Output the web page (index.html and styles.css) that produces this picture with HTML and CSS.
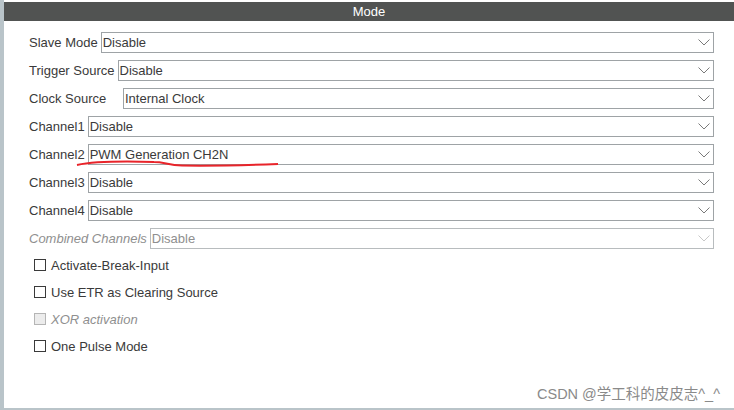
FILE: index.html
```html
<!DOCTYPE html>
<html>
<head>
<meta charset="utf-8">
<link rel="stylesheet" href="styles.css">
</head>
<body>
<div class="panel">
  <div class="header">Mode</div>
  <div class="form">
    <div class="row"><span class="label">Slave Mode</span><div class="select"><span>Disable</span><svg class="chev" viewBox="0 0 12 7"><path d="M0.5 0.5 L6 6 L11.5 0.5"/></svg></div></div>
    <div class="row"><span class="label">Trigger Source</span><div class="select"><span>Disable</span><svg class="chev" viewBox="0 0 12 7"><path d="M0.5 0.5 L6 6 L11.5 0.5"/></svg></div></div>
    <div class="row"><span class="label w-clock">Clock Source</span><div class="select"><span>Internal Clock</span><svg class="chev" viewBox="0 0 12 7"><path d="M0.5 0.5 L6 6 L11.5 0.5"/></svg></div></div>
    <div class="row"><span class="label">Channel1</span><div class="select"><span>Disable</span><svg class="chev" viewBox="0 0 12 7"><path d="M0.5 0.5 L6 6 L11.5 0.5"/></svg></div></div>
    <div class="row mark-row"><span class="label">Channel2</span><div class="select"><span>PWM Generation CH2N</span><svg class="chev" viewBox="0 0 12 7"><path d="M0.5 0.5 L6 6 L11.5 0.5"/></svg></div>
      <svg class="redline" viewBox="0 0 204 8"><path d="M1 5 C 15 2, 45 1, 78 2 C 88 2, 92 5, 106 5.5 C 140 6, 175 5, 202 4"/></svg>
    </div>
    <div class="row"><span class="label">Channel3</span><div class="select"><span>Disable</span><svg class="chev" viewBox="0 0 12 7"><path d="M0.5 0.5 L6 6 L11.5 0.5"/></svg></div></div>
    <div class="row"><span class="label">Channel4</span><div class="select"><span>Disable</span><svg class="chev" viewBox="0 0 12 7"><path d="M0.5 0.5 L6 6 L11.5 0.5"/></svg></div></div>
    <div class="row disabled"><span class="label">Combined Channels</span><div class="select"><span>Disable</span><svg class="chev" viewBox="0 0 12 7"><path d="M0.5 0.5 L6 6 L11.5 0.5"/></svg></div></div>
    <div class="checks">
      <div class="check"><span class="box"></span><span>Activate-Break-Input</span></div>
      <div class="check"><span class="box"></span><span>Use ETR as Clearing Source</span></div>
      <div class="check disabled"><span class="box"></span><span>XOR activation</span></div>
      <div class="check"><span class="box"></span><span>One Pulse Mode</span></div>
    </div>
  </div>
  <div class="watermark">CSDN @学工科的皮皮志^_^</div>
</div>
</body>
</html>
```
FILE: styles.css
```css
html, body {
  margin: 0;
  padding: 0;
  background: #ffffff;
}
body {
  font-family: "Liberation Sans", Arial, "Noto Sans CJK SC", sans-serif;
  font-size: 13px;
  color: #3a3a3a;
}
.panel {
  position: relative;
  width: 734px;
  height: 410px;
  border-left: 4px solid #b9c4c9;
  border-bottom: 2px solid #b9c4c9;
  padding-top: 2px;
  box-sizing: border-box;
}
.header {
  height: 19px;
  line-height: 19px;
  background: #515352;
  color: #ffffff;
  text-align: center;
  font-size: 13px;
}
.form {
  padding: 11px 20px 0 25px;
  display: flex;
  flex-direction: column;
  gap: 7px;
}
.row {
  display: flex;
  align-items: center;
  height: 21px;
  position: relative;
}
.label {
  white-space: nowrap;
  padding-right: 3px;
}
.w-clock {
  width: 94px;
  flex: none;
  padding-right: 0;
}
.select {
  flex: 1;
  height: 21px;
  box-sizing: border-box;
  border: 1px solid #9ea3a6;
  display: flex;
  align-items: center;
  justify-content: space-between;
  padding: 0 2px 0 1px;
}
.chev {
  width: 12px;
  height: 7px;
  margin-right: 1px;
  fill: none;
  stroke: #7a7a7a;
  stroke-width: 1;
}
.disabled .label {
  font-style: italic;
  color: #8f8f8f;
}
.disabled .select {
  border-color: #b8bcbe;
  color: #8f8f8f;
}
.disabled .chev {
  stroke: #c8c8c8;
}
.redline {
  position: absolute;
  left: 47px;
  top: 16px;
  width: 204px;
  height: 8px;
  fill: none;
  stroke: #e8242a;
  stroke-width: 2;
}
.checks {
  display: flex;
  flex-direction: column;
  gap: 7px;
  margin-top: -1px;
  padding-left: 5px;
}
.check {
  display: flex;
  align-items: center;
  height: 20px;
  gap: 5px;
}
.box {
  width: 10px;
  height: 10px;
  border: 1px solid #3a3a3a;
  background: #fff;
  flex: none;
}
.check.disabled {
  font-style: italic;
  color: #8f8f8f;
}
.check.disabled .box {
  border-color: #b5b5b5;
  background: #ececec;
}
.watermark {
  position: absolute;
  right: 14px;
  bottom: 5px;
  color: #8a8a8a;
  font-size: 14.5px;
}
```
